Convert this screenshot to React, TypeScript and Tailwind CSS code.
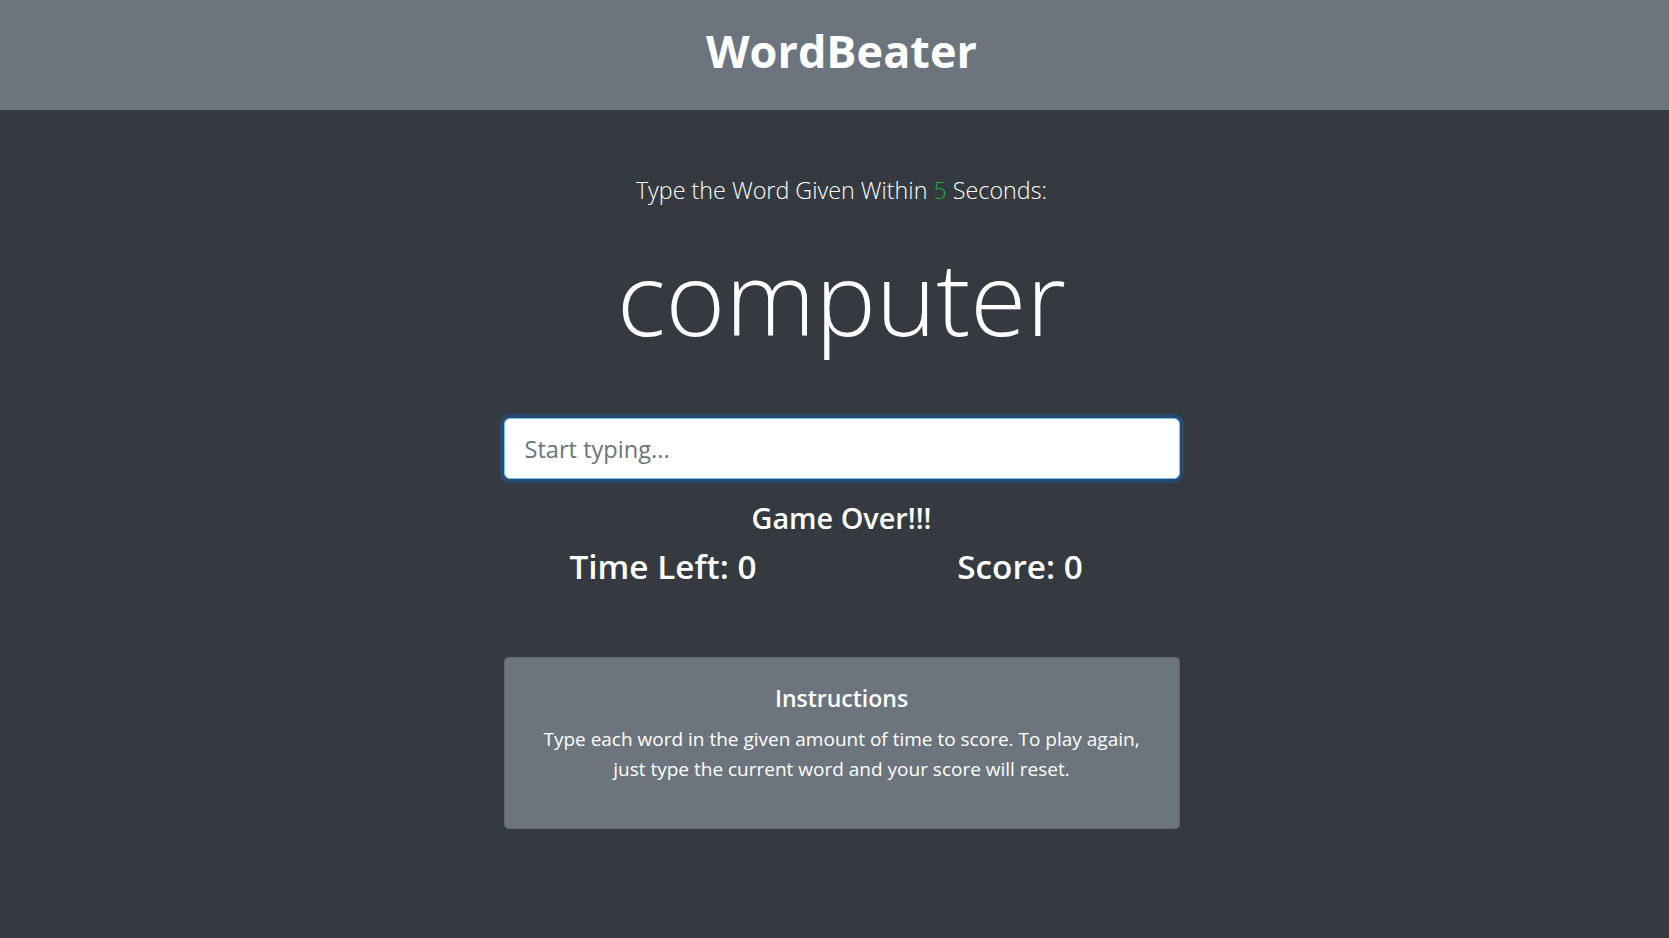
export default function App() {
  return (
    <div className="min-h-screen bg-[#343a40] text-white font-['Open_Sans','Noto_Sans',sans-serif]">
      <header className="flex h-[110px] items-center justify-center bg-[#6c757d] pb-[9px] pl-[14px]">
        <h1 className="text-[45px] font-bold leading-[54px]">WordBeater</h1>
      </header>

      <div className="pl-[14px]">
        <main className="mx-auto w-[676px] pb-10 text-center">
          <p className="mt-[62px] text-[23.3px] font-light leading-[36px]">
            Type the Word Given Within <span className="text-[#28a745]">5</span> Seconds:
          </p>

          <h2 className="mt-[28px] text-[102px] font-light leading-[122px]">computer</h2>

          <input
            type="text"
            placeholder="Start typing..."
            className="mt-[60px] h-[61px] w-full rounded-[6px] border border-[#80bdff] bg-white px-[20px] text-[23.6px] text-[#495057] shadow-[0_0_0_4px_rgba(0,123,255,0.25)] outline-none placeholder:text-[#6c757d]"
          />

          <h4 className="mt-[22px] text-[28.8px] font-semibold leading-[34px]">Game Over!!!</h4>

          <div className="mx-[-19px] mt-[11px] grid grid-cols-2">
            <h3 className="px-[19px] text-[33.3px] font-semibold leading-[40px]">Time Left: 0</h3>
            <h3 className="px-[19px] text-[33.3px] font-semibold leading-[40px]">Score: 0</h3>
          </div>

          <div className="mt-[71px] rounded-[5px] border border-black/10 bg-[#6c757d] px-[25px] pt-[26px] pb-[44px]">
            <h5 className="text-[23px] font-semibold leading-[28px]">Instructions</h5>
            <p className="mt-[12px] text-[19px] leading-[30px]">
              Type each word in the given amount of time to score. To play again, just type the current word and your
              score will reset.
            </p>
          </div>
        </main>
      </div>
    </div>
  );
}
